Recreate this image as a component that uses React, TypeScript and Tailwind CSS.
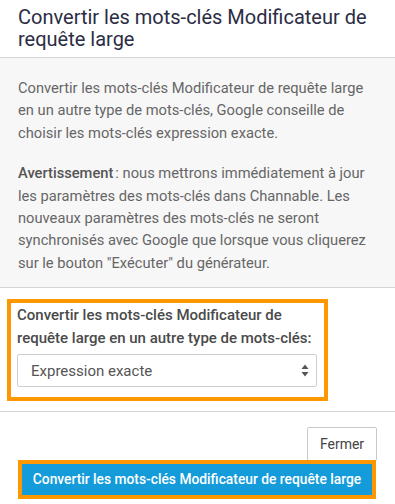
export default function App() {
  return (
    <div className="w-[395px] h-[504px] overflow-hidden bg-white font-['Roboto',sans-serif]">
      {/* en-tête */}
      <div className="px-[18px] pt-[6px] pb-[7px] border-b border-[#d6d6d6] text-[20px] leading-[22px] text-[#2b2d44] whitespace-nowrap">
        Convertir les mots-clés Modificateur de
        <br />
        requête large
      </div>

      {/* texte explicatif */}
      <div className="bg-[#f7f7f7] px-[18px] pt-[19px] pb-[13px] border-b border-[#d6d6d6] text-[14.7px] leading-[22.4px] text-[#666]">
        <p className="mb-[18px]">
          Convertir les mots-clés Modificateur de requête large en un autre type de mots-clés, Google conseille de
          choisir les mots-clés expression exacte.
        </p>
        <p>
          <strong className="font-medium text-[#555]">Avertissement</strong>
          <span className="ml-[2px]">: nous mettrons immédiatement à jour les paramètres des mots-clés dans
          Channable. Les nouveaux paramètres des mots-clés ne seront synchronisés avec Google que lorsque vous
          cliquerez sur le bouton "Exécuter" du générateur.</span>
        </p>
      </div>

      {/* formulaire */}
      <div className="px-[7px] pt-[11px] pb-[10px]">
        <div className="w-[321px] border-[4px] border-[#ff9800] px-[6px] pt-[1px] pb-[10px]">
          <label className="block font-medium text-[15px] leading-[23px] text-[#4a4a4a]">
            Convertir les mots-clés Modificateur de requête large en un autre type de mots-clés:
          </label>
          <div className="mt-[4px] h-[33px] w-[300px] flex items-center justify-between border border-[#cfcfcf] rounded-[2px] bg-white pl-[13px] pr-[7px] text-[15px] text-[#555]">
            <span>Expression exacte</span>
            <svg width="8" height="13" viewBox="0 0 8 13">
              <path d="M4 0.5 L7.5 5 L0.5 5 Z" fill="#555" />
              <path d="M4 12.5 L7.5 8 L0.5 8 Z" fill="#555" />
            </svg>
          </div>
        </div>
      </div>

      {/* pied */}
      <div className="border-t border-[#d6d6d6] pt-[15px] pr-[18px] flex flex-col items-end">
        <button className="h-[34px] w-[70px] border border-[#c8c8c8] rounded-[2px] bg-white text-[14px] text-[#444]">
          Fermer
        </button>
        <div className="-mt-[1px] mr-[1px] border-[4px] border-[#ff9800]">
          <button className="h-[31px] w-[350px] bg-[#149bd9] text-white font-medium text-[13.8px]">
            Convertir les mots-clés Modificateur de requête large
          </button>
        </div>
      </div>
    </div>
  )
}
